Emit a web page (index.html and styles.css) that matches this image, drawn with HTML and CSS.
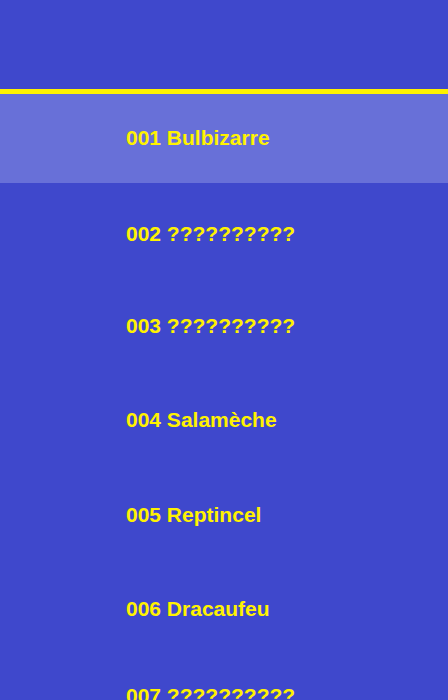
FILE: index.html
```html
<!DOCTYPE html>
<html lang="fr">
<head>
<meta charset="utf-8">
<title>Pokédex</title>
<link rel="stylesheet" href="styles.css">
</head>
<body>
<div class="app">
  <header class="top"></header>
  <ul class="list">
    <li class="row selected">001 Bulbizarre</li>
    <li class="row">002 ??????????</li>
    <li class="row">003 ??????????</li>
    <li class="row">004 Salamèche</li>
    <li class="row">005 Reptincel</li>
    <li class="row">006 Dracaufeu</li>
    <li class="row">007 ??????????</li>
  </ul>
</div>
</body>
</html>
```
FILE: styles.css
```css
html, body {
  margin: 0;
  padding: 0;
  background: #3f48cc;
}
.app {
  width: 448px;
  height: 700px;
  overflow: hidden;
  background: #3f48cc;
  font-family: "Liberation Sans", Arial, sans-serif;
}
.top {
  height: 89px;
  border-bottom: 5px solid #fff200;
}
.list {
  list-style: none;
  margin: 0;
  padding: 0;
  display: grid;
  grid-template-rows: 89px 103px 81px 107px 83px 106px 67px;
}
.row {
  display: flex;
  align-items: center;
  padding: 0 0 2px 126px;
  box-sizing: border-box;
  color: #fff200;
  font-size: 21px;
  font-weight: bold;
  white-space: nowrap;
}
.row.selected {
  background: #6870d8;
}
```
